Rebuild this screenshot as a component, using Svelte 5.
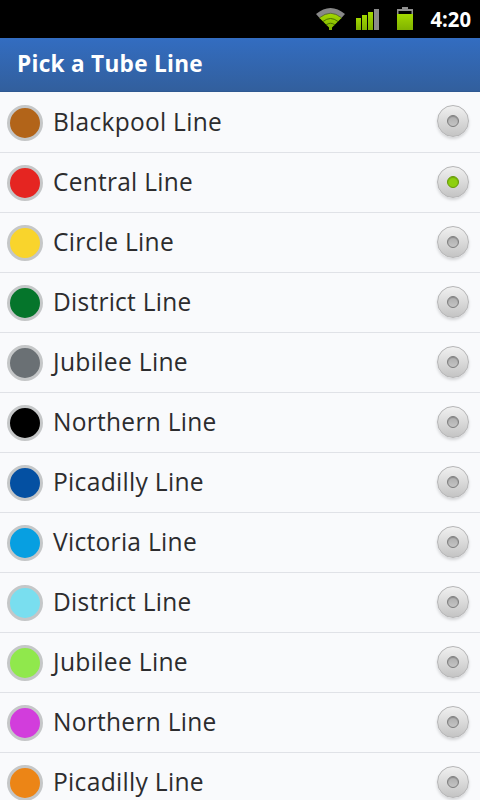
<script>
  const lines = [
    { name: 'Blackpool Line', color: '#b26419', width: 169 },
    { name: 'Central Line', color: '#e52521', width: 140 },
    { name: 'Circle Line', color: '#f9d42c', width: 121 },
    { name: 'District Line', color: '#05752b', width: 138.5 },
    { name: 'Jubilee Line', color: '#6a7074', width: 135 },
    { name: 'Northern Line', color: '#000000', width: 163.5 },
    { name: 'Picadilly Line', color: '#0450a2', width: 151 },
    { name: 'Victoria Line', color: '#079fe1', width: 144 },
    { name: 'District Line', color: '#79deef', width: 138.5 },
    { name: 'Jubilee Line', color: '#90e84c', width: 135 },
    { name: 'Northern Line', color: '#d23ddc', width: 163.5 },
    { name: 'Picadilly Line', color: '#ec8516', width: 151 }
  ];
  let selected = $state(1);
</script>

<div class="screen">
  <div class="status">
    <svg class="icons" width="110" height="38" viewBox="310 0 110 38" aria-hidden="true">
      <defs>
        <linearGradient id="green" x1="0" y1="0" x2="0" y2="1">
          <stop offset="0" stop-color="#a2d800" />
          <stop offset="1" stop-color="#80b200" />
        </linearGradient>
      </defs>
      <path d="M316 14Q330.500 2 345 14L341 18.500Q330.500 9.500 320 18.500Z" fill="#888" />
      <path d="M319.500 18Q330.500 9.500 341.500 18L332 27.500V30H329V27.500Z" fill="url(#green)" />
      <path d="M323 21.500Q330.500 15.500 338 21.500M326 25Q330.500 21.500 335 25" fill="none" stroke="#416500" stroke-width="0.900" />
      <path d="M319.500 17.700Q330.500 8.800 341.500 17.700" fill="none" stroke="#4a6510" stroke-width="0.700" />
      <g fill="url(#green)">
        <rect x="356" y="18" width="5" height="12" />
        <rect x="362" y="15" width="5" height="15" />
        <rect x="368" y="12" width="5" height="18" />
        <rect x="397" y="14" width="16" height="16" />
      </g>
      <rect x="374" y="9" width="5" height="21" fill="#8b8b8b" />
      <path d="M397 14V9H402V7H408V9H413V14H411.500V11H398.500V14Z" fill="#909090" />
    </svg>
    <svg class="clock" width="50" height="38" aria-hidden="true">
      <text x="0.500" y="27" textLength="40.500" lengthAdjust="spacingAndGlyphs">4:20</text>
    </svg>
  </div>
  <header>
    <svg width="240" height="54">
      <text x="17" y="34" textLength="186" lengthAdjust="spacingAndGlyphs">Pick a Tube Line</text>
    </svg>
  </header>
  <main>
    {#each lines as line, i}
      <button class="row" onclick={() => (selected = i)}>
        <span class="dot" style="background: {line.color}"></span>
        <svg class="label" width="384" height="59">
          <text x="0" y="38" textLength={line.width} lengthAdjust="spacingAndGlyphs">{line.name}</text>
        </svg>
        <span class="radio"><span class="pip" class:on={selected === i}></span></span>
      </button>
    {/each}
  </main>
</div>

<style>
  :global(body) { margin: 0; overflow: hidden; }
  .screen {
    width: 480px;
    height: 800px;
    overflow: hidden;
    display: flex;
    flex-direction: column;
    background: #f9fafc;
    font-family: 'Open Sans', 'Noto Sans', sans-serif;
  }
  svg { display: block; flex: none; overflow: visible; }
  .status {
    height: 38px;
    flex: none;
    display: flex;
    justify-content: flex-end;
    background: #000;
  }
  .icons { margin-right: 10px; }
  .clock text { font-size: 21px; font-weight: 700; fill: #fff; }
  header {
    height: 54px;
    flex: none;
    box-sizing: border-box;
    border-bottom: 1px solid #2f5992;
    background: linear-gradient(#336dc1, #325f9d);
  }
  header text { font-size: 24px; font-weight: 700; fill: #fff; letter-spacing: 0.3px; }
  main { display: flex; flex-direction: column; padding-top: 1px; }
  .row {
    height: 60px;
    flex: none;
    box-sizing: border-box;
    display: flex;
    align-items: center;
    padding: 0 11px 0 7px;
    border: 0;
    border-bottom: 1px solid #e0e2e7;
    background: none;
    font: inherit;
  }
  .dot {
    width: 36px;
    height: 36px;
    flex: none;
    box-sizing: border-box;
    border: 3px solid #c5c7c8;
    border-radius: 50%;
    margin-top: 1px;
  }
  .label { margin-left: 10px; }
  .label text { font-size: 26px; fill: #2c2c2e; letter-spacing: 0.3px; }
  .radio {
    width: 32px;
    height: 32px;
    flex: none;
    box-sizing: border-box;
    display: flex;
    align-items: center;
    justify-content: center;
    border: 1px solid #b5b5b6;
    border-radius: 50%;
    background: linear-gradient(#f0f0f0, #c4c4c4);
    box-shadow: 0 2px 3px rgba(0, 0, 0, 0.15);
    margin-left: auto;
    margin-bottom: 1px;
  }
  .row:first-child .radio { margin-bottom: 3px; }
  .pip {
    width: 12px;
    height: 12px;
    box-sizing: border-box;
    border: 1px solid #7c7c7c;
    border-radius: 50%;
    background: linear-gradient(#adadad, #c4c4c4);
    box-shadow: inset 0 1px 1px rgba(0, 0, 0, 0.2);
  }
  .pip.on { border-color: #659807; background: #8dd00e; }
</style>
